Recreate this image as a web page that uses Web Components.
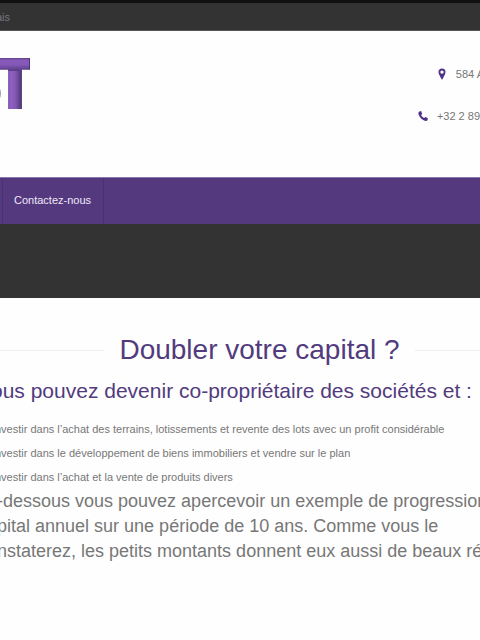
<!DOCTYPE html>
<html lang="fr">
<head>
<meta charset="utf-8">
<title>Doubler votre capital</title>
<style>
html, body { margin: 0; background: #fefefe; overflow-x: hidden; }
body { font: 11px/24px "Liberation Sans", Arial, sans-serif; color: #777; }
</style>
</head>
<body>
<site-page></site-page>
<script>
const define = (name, html) => {
  const template = document.createElement('template');
  template.innerHTML = html;
  customElements.define(name, class extends HTMLElement {
    constructor() {
      super();
      this.attachShadow({ mode: 'open' }).append(template.content.cloneNode(true));
    }
  });
};

define('top-bar', `<style>
:host { display: flex; align-items: center; height: 27px; border-top: 3px solid #111; border-bottom: 1px solid #555; background: #333; color: #777582; }
a { color: inherit; text-decoration: none; margin-left: -4px; white-space: nowrap; }
</style><a href="#"><slot></slot></a>`);

define('brand-logo', `<style>
:host { display: block; }
a, svg { display: block; }
text { font: bold 68px "Liberation Sans", Arial, sans-serif; stroke-width: 4; }
.s { fill: #77718a; stroke: #77718a; }
.t { fill: url(#metal); stroke: url(#metal); }
</style><a href="#" aria-label="Accueil"><svg width="30" height="60" viewBox="0 0 30 60">
<defs>
<linearGradient id="stem"><stop offset="0" stop-color="#7650a5"/><stop offset=".2" stop-color="#9161c4"/><stop offset=".55" stop-color="#8256b2"/><stop offset="1" stop-color="#48366f"/></linearGradient>
<linearGradient id="bar" x2="0" y2="1"><stop offset="0" stop-color="#5d4287"/><stop offset=".15" stop-color="#8658b8"/><stop offset=".5" stop-color="#8658b8"/><stop offset="1" stop-color="#553a80"/></linearGradient>
<pattern id="metal" patternUnits="userSpaceOnUse" width="30" height="60"><rect width="30" height="60" fill="#48366f"/><rect x="8" y="17" width="14" height="43" fill="url(#stem)"/><rect y="4" width="29" height="13" fill="url(#bar)"/></pattern>
</defs>
<text class="s" x="-44" y="53">S</text>
<text class="t" x="15" y="53" text-anchor="middle">T</text>
</svg></a>`);

define('contact-line', `<style>
:host { display: flex; align-items: center; gap: 9px; white-space: nowrap; }
svg { width: 10px; height: 12px; fill: #50328a; flex: none; display: none; }
:host([icon=pin]) { margin-right: -4px; }
:host([icon=pin]) .pin, :host([icon=phone]) .phone { display: block; }
</style>
<svg class="pin" viewBox="0 0 10 12"><path fill-rule="evenodd" d="M5 .6a3.500 3.500 0 0 0-3.500 3.500c0 1 .3 1.600.6 2.300L4.400 11q.6 1 1.200 0l2.300-4.600c.3-.7.6-1.300.6-2.300A3.500 3.500 0 0 0 5 .6zm0 1.800a1.700 1.700 0 1 1 0 3.400 1.700 1.700 0 0 1 0-3.400z"/></svg>
<svg class="phone" viewBox="0 0 10 12"><path d="M2.300 1.200 1 1.800C.3 2.400.3 3.700.7 4.800c1.100 3 3.200 5 6 6 1.200.4 2.400 0 2.800-.9l.4-1.300c0-.3-.2-.5-.5-.6L7.600 7c-.5-.2-1 .8-1.400 1C4.900 7.500 3.700 6.400 3.100 5.100c.2-.4 1.200-.9 1.100-1.300L3.300 1.600c-.2-.4-.6-.6-1-.4z"/></svg>
<slot></slot>`);

define('site-header', `<style>
:host { display: flex; justify-content: space-between; padding: 23px 0 37px; min-height: 86px; overflow: hidden; }
.contacts { display: grid; gap: 18px; justify-items: end; padding-top: 8px; align-content: start; }
</style><brand-logo></brand-logo><div class="contacts"><slot></slot></div>`);

define('nav-bar', `<style>
:host { display: flex; background: #55397e; height: 46px; border-top: 1px solid #8b76ac; color: #eee8f8; }
a { display: flex; align-items: center; padding: 0 12px 2px 11px; margin-left: 2px; border: solid #4a3270; border-width: 0 1px; color: inherit; text-decoration: none; }
</style><a href="#"><slot></slot></a>`);

define('title-band', `<style>:host { display: block; height: 74px; background: #333; }</style>`);

define('section-title', `<style>
:host { display: flex; align-items: center; gap: 15px; color: #523b7d; }
:host::before, :host::after { content: ""; flex: 1; height: 1px; background: #eee; }
h1 { margin: 0; font: 28px/40px "Liberation Sans", Arial, sans-serif; white-space: nowrap; }
</style><h1><slot></slot></h1>`);

define('intro-text', `<style>
:host { display: block; white-space: nowrap; padding-top: 32px; }
section-title { margin: 0 -39px 9px 0; }
h2 { margin: 0 0 14px -9px; font: 21px/24px "Liberation Sans", Arial, sans-serif; color: #523b7d; }
ul { list-style: none; margin: 0 0 0 -5px; padding: 0; }
p { margin: 0 0 0 -3px; font-size: 18px; line-height: 25px; }
</style>
<section-title>Doubler votre capital ?</section-title>
<h2>ous pouvez devenir co-propriétaire des sociétés et :</h2>
<ul><li>nvestir dans l’achat des terrains, lotissements et revente des lots avec un profit considérable</li>
<li>nvestir dans le développement de biens immobiliers et vendre sur le plan</li>
<li>nvestir dans l’achat et la vente de produits divers</li></ul>
<p>-dessous vous pouvez apercevoir un exemple de progression<br>pital annuel sur une période de 10 ans. Comme vous le<br>nstaterez, les petits montants donnent eux aussi de beaux ré</p>`);

define('site-page', `<style>:host { display: block; overflow: hidden; }</style>
<top-bar>ais</top-bar>
<site-header><contact-line icon="pin">584 A</contact-line><contact-line icon="phone">+32 2 89</contact-line></site-header>
<nav-bar>Contactez-nous</nav-bar>
<title-band></title-band>
<intro-text></intro-text>`);
</script>
</body>
</html>
